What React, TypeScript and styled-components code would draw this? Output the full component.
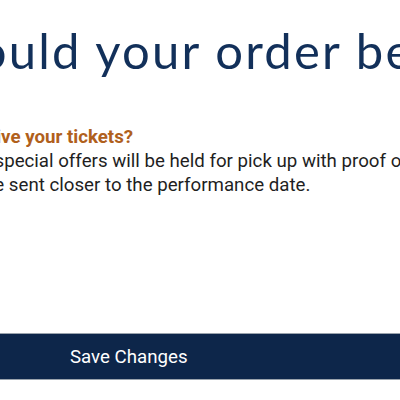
import React from "react";
import styled, { createGlobalStyle } from "styled-components";

const Global = createGlobalStyle`
  html, body { margin: 0; padding: 0; background: #ffffff; overflow: hidden; }
  body { width: 400px; height: 400px; }
`;

const Viewport = styled.div`
  width: 400px;
  height: 400px;
  overflow: hidden;
  background: #ffffff;
`;

const Page = styled.main`
  width: 1100px;
  margin-left: -228px;
  padding-top: 20px;
  display: flex;
  flex-direction: column;
`;

const Title = styled.h1`
  margin: 0 0 0 31px;
  font-family: Lato, "Open Sans", sans-serif;
  font-weight: 400;
  font-size: 49px;
  letter-spacing: 2.2px;
  line-height: 60px;
  color: #12305a;
  white-space: nowrap;
`;

const Section = styled.section`
  margin-top: 46px;
  display: flex;
  flex-direction: column;
  font-family: Roboto, "Liberation Sans", sans-serif;
`;

const Question = styled.h2`
  margin: 0;
  font-size: 18.7px;
  font-weight: 700;
  line-height: 23px;
  color: #b0601c;
  white-space: nowrap;
`;

const Body = styled.p`
  margin: 0;
  padding-left: 5px;
  font-size: 18.7px;
  font-weight: 400;
  line-height: 24px;
  color: #1f1f1f;
  white-space: nowrap;
`;

const SaveBar = styled.button`
  margin-top: 136px;
  height: 47px;
  width: 100%;
  border: none;
  border-top: 1px solid #9aa3ad;
  border-bottom: 1px solid #9aa3ad;
  background: #0d264a;
  color: #ffffff;
  font-family: Roboto, "Liberation Sans", sans-serif;
  font-size: 18.7px;
  text-align: left;
  padding: 0 0 0 298px;
  cursor: pointer;
`;

export default function App() {
  return (
    <Viewport>
      <Global />
      <Page>
        <Title>How should your order be delivered?</Title>
        <Section>
          <Question>How would you like to receive your tickets?</Question>
          <Body>
            All tickets purchased with special offers will be held for pick up with proof of eligibility.
            <br />
            All your other tickets will be sent closer to the performance date.
          </Body>
        </Section>
        <SaveBar>Save Changes</SaveBar>
      </Page>
    </Viewport>
  );
}
